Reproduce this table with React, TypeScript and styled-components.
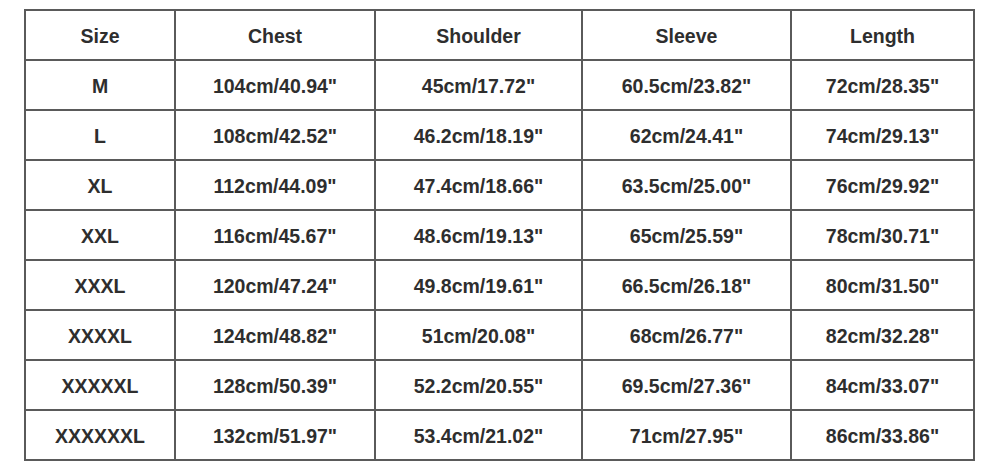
import React from "react";
import styled, { createGlobalStyle } from "styled-components";

const Global = createGlobalStyle`
  html, body { margin: 0; padding: 0; background: #ffffff; }
  body { font-family: "Liberation Sans", Arial, sans-serif; }
`;

const Page = styled.div`
  width: 1000px;
  height: 471px;
  padding: 9px 0 0 24px;
  box-sizing: border-box;
`;

const Grid = styled.div`
  display: grid;
  grid-template-columns: 150px 200px 207px 209px 183px;
  grid-auto-rows: 50px;
  width: max-content;
  border-top: 2px solid #5a5a5a;
  border-left: 2px solid #5a5a5a;
`;

const Cell = styled.div`
  display: flex;
  align-items: center;
  justify-content: center;
  border-right: 2px solid #5a5a5a;
  border-bottom: 2px solid #5a5a5a;
  font-family: "Liberation Sans", Arial, sans-serif;
  font-weight: 700;
  font-size: 19.5px;
  color: #2e2e2e;
  padding-top: 3px;
`;

const header = ["Size", "Chest", "Shoulder", "Sleeve", "Length"];
const rows: string[][] = [
  ["M", '104cm/40.94"', '45cm/17.72"', '60.5cm/23.82"', '72cm/28.35"'],
  ["L", '108cm/42.52"', '46.2cm/18.19"', '62cm/24.41"', '74cm/29.13"'],
  ["XL", '112cm/44.09"', '47.4cm/18.66"', '63.5cm/25.00"', '76cm/29.92"'],
  ["XXL", '116cm/45.67"', '48.6cm/19.13"', '65cm/25.59"', '78cm/30.71"'],
  ["XXXL", '120cm/47.24"', '49.8cm/19.61"', '66.5cm/26.18"', '80cm/31.50"'],
  ["XXXXL", '124cm/48.82"', '51cm/20.08"', '68cm/26.77"', '82cm/32.28"'],
  ["XXXXXL", '128cm/50.39"', '52.2cm/20.55"', '69.5cm/27.36"', '84cm/33.07"'],
  ["XXXXXXL", '132cm/51.97"', '53.4cm/21.02"', '71cm/27.95"', '86cm/33.86"'],
];

export default function App() {
  return (
    <Page>
      <Global />
      <Grid>
        {header.map((h) => (
          <Cell key={h}>{h}</Cell>
        ))}
        {rows.map((r, i) =>
          r.map((c, j) => <Cell key={`${i}-${j}`}>{c}</Cell>)
        )}
      </Grid>
    </Page>
  );
}
